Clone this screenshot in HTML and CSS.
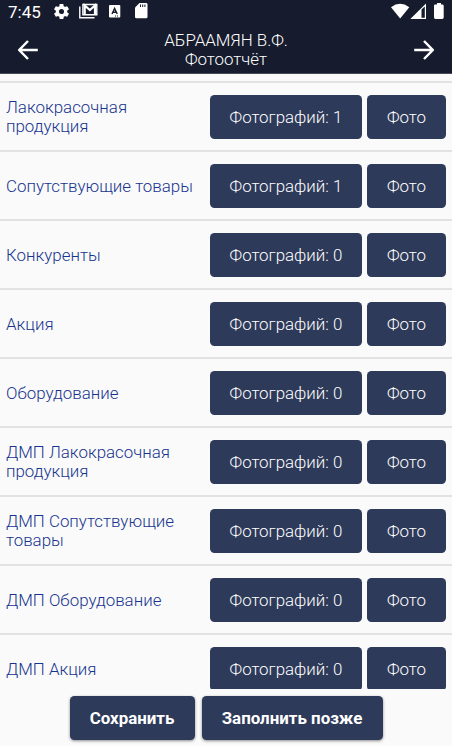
FILE: index.html
```html
<!DOCTYPE html>
<html lang="ru">
  <head>
    <meta charset="UTF-8" />
    <meta name="viewport" content="width=device-width, initial-scale=1.0" />
    <title>Фотоотчёт</title>
    <link rel="stylesheet" href="styles.css">
  </head>
  <body>
    <header class="header">
      <div class="status-bar">
        <span class="time">7:45</span>
        <svg class="icon-gear" width="19" height="19" viewBox="0 0 24 24">
          <path d="M19.14 12.94c.04-.3.06-.61.06-.94s-.02-.64-.07-.94l2.03-1.58a.5.5 0 0 0 .12-.61l-1.92-3.32a.5.5 0 0 0-.59-.22l-2.39.96a7 7 0 0 0-1.62-.94l-.36-2.54a.48.48 0 0 0-.48-.41h-3.84a.48.48 0 0 0-.47.41l-.36 2.54a7.4 7.4 0 0 0-1.62.94l-2.39-.96a.48.48 0 0 0-.59.22L2.74 8.87a.48.48 0 0 0 .12.61l2.03 1.58a7 7 0 0 0 0 1.88l-2.03 1.58a.5.5 0 0 0-.12.61l1.92 3.32c.12.22.37.29.59.22l2.39-.96c.5.38 1.03.7 1.62.94l.36 2.54c.05.24.24.41.48.41h3.84c.24 0 .44-.17.47-.41l.36-2.54a7 7 0 0 0 1.62-.94l2.39.96c.22.08.47 0 .59-.22l1.92-3.32a.48.48 0 0 0-.12-.61zM12 15.2a3.2 3.2 0 1 1 0-6.4 3.2 3.2 0 0 1 0 6.4z" />
        </svg>
        <svg class="icon-mail" width="19" height="16" viewBox="0 0 19 16">
          <path d="M.8 3.5V14.8H15.5" fill="none" stroke="#fff" stroke-width="1.4" />
          <path d="M3.9 1.5H17.8V11.8H3.9z" fill="none" stroke="#fff" stroke-width="1.4" />
          <path d="M5.7 12V2.5L10.85 7L16 2.5V12" fill="none" stroke="#fff" stroke-width="2.2" />
        </svg>
        <svg class="icon-lang" width="12" height="13" viewBox="0 0 12 13">
          <rect width="11.3" height="12.5" rx="1" />
          <path d="M3 9L5.6 3.5L8.2 9M4 7.3H7.2" fill="none" stroke="#161c2e" stroke-width="1.5" />
          <path d="M6 11H7M8 11H9" stroke="#161c2e" />
        </svg>
        <svg class="icon-card" width="13" height="16" viewBox="0 0 13 16">
          <path d="M4.5 0H11.1Q12.5 0 12.5 1.4V14Q12.5 15.3 11.1 15.3H1.5Q0 15.3 0 14V4.5z" />
          <path d="M5.5 1.5V4M7.7 1.5V4M9.9 1.5V4" stroke="#161c2e" stroke-width="1" />
        </svg>
        <svg class="icon-network" width="54" height="17" viewBox="0 0 54 17">
          <path d="M0 4.2Q9 -2.7 18.3 4.2L9.2 15.5z" />
          <path d="M19.3 16L35 .5V16z" />
          <path d="M30.5 6.5L33.800 3.500V14.800H30.500z" fill="#161c2e" />
          <path d="M43.5 1.6H46V0H50V1.6H51.2Q52.7 1.6 52.7 3V14.6Q52.7 16 51.2 16H44.5Q43 16 43 14.6V3Q43 1.6 44 1.6z" />
        </svg>
      </div>
      <div class="toolbar">
        <svg width="20" height="20" viewBox="0 0 20 20">
          <path d="M19.8 10H1.5M10 1L1.2 10L10 19" fill="none" stroke="#fff" stroke-width="2.5" />
        </svg>
        <h1>АБРААМЯН В.Ф.<br>Фотоотчёт</h1>
        <svg width="20" height="20" viewBox="0 0 20 20">
          <path d="M.2 10H18.5M10 1L18.8 10L10 19" fill="none" stroke="#fff" stroke-width="2.5" />
        </svg>
      </div>
    </header>

    <main class="list">
      <div class="row">
        <span class="name">Лакокрасочная продукция</span>
        <button class="btn count">Фотографий: 1</button>
        <button class="btn photo">Фото</button>
      </div>
      <div class="row">
        <span class="name">Сопутствующие товары</span>
        <button class="btn count">Фотографий: 1</button>
        <button class="btn photo">Фото</button>
      </div>
      <div class="row">
        <span class="name">Конкуренты</span>
        <button class="btn count">Фотографий: 0</button>
        <button class="btn photo">Фото</button>
      </div>
      <div class="row">
        <span class="name">Акция</span>
        <button class="btn count">Фотографий: 0</button>
        <button class="btn photo">Фото</button>
      </div>
      <div class="row">
        <span class="name">Оборудование</span>
        <button class="btn count">Фотографий: 0</button>
        <button class="btn photo">Фото</button>
      </div>
      <div class="row">
        <span class="name">ДМП Лакокрасочная продукция</span>
        <button class="btn count">Фотографий: 0</button>
        <button class="btn photo">Фото</button>
      </div>
      <div class="row">
        <span class="name">ДМП Сопутствующие товары</span>
        <button class="btn count">Фотографий: 0</button>
        <button class="btn photo">Фото</button>
      </div>
      <div class="row">
        <span class="name">ДМП Оборудование</span>
        <button class="btn count">Фотографий: 0</button>
        <button class="btn photo">Фото</button>
      </div>
      <div class="row">
        <span class="name">ДМП Акция</span>
        <button class="btn count">Фотографий: 0</button>
        <button class="btn photo">Фото</button>
      </div>
    </main>

    <footer class="footer">
      <button class="btn save">Сохранить</button>
      <button class="btn later">Заполнить позже</button>
    </footer>
  </body>
</html>
```

FILE: styles.css
```css
* {
  margin: 0;
  padding: 0;
  box-sizing: border-box;
  font-family: Roboto, sans-serif;
}

body {
  display: flex;
  flex-direction: column;
  height: 746px;
  overflow: hidden;
  background-color: #fafafa;
}

.header {
  height: 74px;
  background-color: #161c2e;
  color: #ffffff;
  border-bottom: 1px solid #444958;
}

.status-bar {
  display: flex;
  align-items: flex-start;
  height: 26px;
  padding: 3px 7px 0 8px;
  fill: #ffffff;
}

.time {
  width: 44px;
  font-size: 17px;
  line-height: 18px;
}

.icon-gear {
  margin: -1px 8px 0 0;
}

.icon-mail {
  margin-right: 11px;
}

.icon-lang {
  margin: 2px 14px 0 0;
}

.icon-network {
  margin-left: auto;
}

.toolbar {
  display: flex;
  justify-content: space-between;
  align-items: center;
  height: 47px;
  padding: 0 18px;
}

.toolbar h1 {
  padding-top: 1px;
  font-size: 16.9px;
  font-weight: 300;
  line-height: 19.5px;
  text-align: center;
}

.list {
  height: 615px;
  padding-top: 7px;
  overflow: hidden;
}

.row {
  display: flex;
  align-items: center;
  height: 69px;
  padding: 0 6px;
  border-top: 2px solid #e2e2e2;
}

.name {
  flex: 1;
  padding-top: 1.5px;
  color: #17348f;
  font-size: 16.9px;
  font-weight: 300;
  line-height: 19.5px;
}

.btn {
  height: 44px;
  border: none;
  border-radius: 4.5px;
  background-color: #2e3a59;
  color: #ffffff;
  font-size: 16.9px;
  font-weight: 300;
  white-space: nowrap;
}

.count {
  width: 152px;
  margin-right: 5px;
}

.photo {
  width: 79px;
}

.footer {
  display: flex;
  justify-content: center;
  gap: 7px;
  padding-top: 7px;
}

.footer .btn {
  font-weight: 700;
  box-shadow: 0 1px 3px rgba(0, 0, 0, 0.45);
}

.save {
  width: 125px;
}

.later {
  width: 181px;
}
```
